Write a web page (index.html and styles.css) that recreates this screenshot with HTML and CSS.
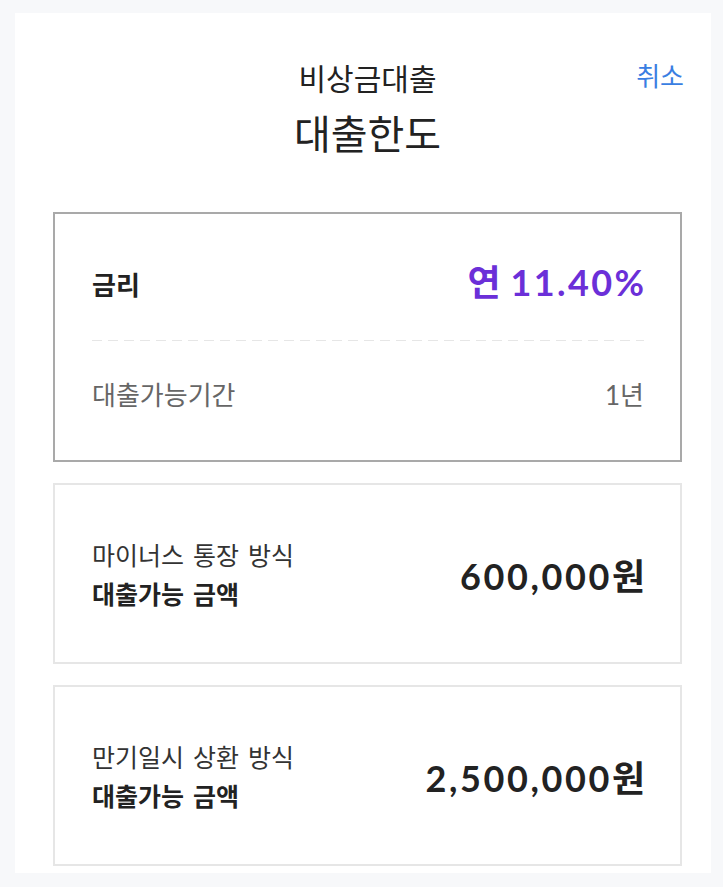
FILE: index.html
```html
<!DOCTYPE html>
<html lang="ko">
<head>
<meta charset="utf-8">
<title>대출한도</title>
<link rel="stylesheet" href="styles.css">
</head>
<body>
<div class="panel">
  <header class="header">
    <div class="spacer"></div>
    <div class="titles">
      <div class="subtitle">비상금대출</div>
      <h1 class="title">대출한도</h1>
    </div>
    <a class="cancel">취소</a>
  </header>

  <section class="card card-rate">
    <div class="row">
      <span class="label-strong">금리</span>
      <span class="rate"><span class="prefix">연 </span>11.40<span class="unit">%</span></span>
    </div>
    <div class="divider"></div>
    <div class="row">
      <span class="label-muted">대출가능기간</span>
      <span class="value-muted">1년</span>
    </div>
  </section>

  <section class="card card-amount">
    <div class="amount-label">
      <div class="line">마이너스 통장 방식</div>
      <div class="line bold">대출가능 금액</div>
    </div>
    <div class="amount">600,000<span class="unit">원</span></div>
  </section>

  <section class="card card-amount">
    <div class="amount-label">
      <div class="line">만기일시 상환 방식</div>
      <div class="line bold">대출가능 금액</div>
    </div>
    <div class="amount">2,500,000<span class="unit">원</span></div>
  </section>
</div>
</body>
</html>
```

FILE: styles.css
```css
* { box-sizing: border-box; }

html, body {
  margin: 0;
  padding: 0;
}

body {
  background: #f7f8fa;
  padding: 13px 12px 14px 15px;
  font-family: "Noto Sans CJK KR", "Noto Sans", sans-serif;
  color: #222;
}

.panel {
  background: #fff;
  padding: 0 29px 7px 38px;
  height: 860px;
}

.header {
  display: grid;
  grid-template-columns: 1fr auto 1fr;
  padding-top: 45px;
  margin-bottom: 54px;
}

.titles {
  text-align: center;
}

.subtitle {
  font-size: 30px;
  line-height: 38px;
  color: #222;
}

.title {
  margin: 10px 0 0;
  font-size: 40px;
  line-height: 52px;
  font-weight: 400;
  color: #222;
}

.cancel {
  justify-self: end;
  align-self: start;
  font-size: 26px;
  line-height: 32px;
  margin-top: 1px;
  margin-right: -2px;
  color: #3a7ee2;
  text-decoration: none;
}

.card {
  background: #fff;
  border: 2px solid #e6e6e6;
}

.card-rate {
  border-color: #a9a9a9;
  padding: 40px 36px 38px 37px;
  margin-bottom: 21px;
}

.row {
  display: flex;
  justify-content: space-between;
  align-items: center;
  height: 58px;
}

.label-strong {
  font-size: 26px;
  font-weight: 700;
  color: #222;
}

.rate {
  font-family: Lato, "Noto Sans CJK KR", sans-serif;
  font-size: 36px;
  font-weight: 700;
  color: #6b2fd8;
  letter-spacing: 2.4px;
  margin-top: -6px;
}

.prefix {
  letter-spacing: 0;
  margin-right: 1px;
}

.unit {
  letter-spacing: 0;
}

.divider {
  height: 1px;
  margin: 28px 0 23px;
  background: repeating-linear-gradient(to right, #e6e6e6 0 10px, transparent 10px 16px);
}

.label-muted {
  font-size: 26px;
  color: #666;
}

.value-muted {
  font-family: Lato, "Noto Sans CJK KR", sans-serif;
  font-size: 26px;
  color: #666;
}

.card-amount {
  display: flex;
  justify-content: space-between;
  align-items: center;
  height: 181px;
  padding: 0 35px 0 37px;
  margin-bottom: 21px;
}

.card-amount:last-child {
  margin-bottom: 0;
}

.amount-label .line {
  font-size: 25px;
  line-height: 39px;
  word-spacing: 2px;
  color: #333;
}

.amount-label .bold {
  font-weight: 700;
  color: #222;
}

.amount {
  font-family: Lato, "Noto Sans CJK KR", sans-serif;
  font-size: 36px;
  font-weight: 700;
  letter-spacing: 2.6px;
  color: #222;
}
```
